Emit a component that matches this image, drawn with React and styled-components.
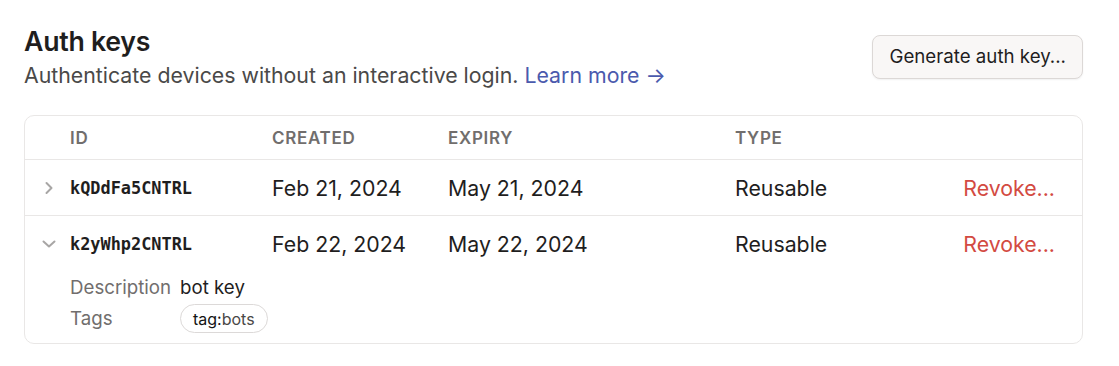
import React from "react";
import styled, { createGlobalStyle } from "styled-components";

const Global = createGlobalStyle`
  html, body { margin: 0; padding: 0; background: #ffffff; }
  body { font-family: Inter, "Noto Sans", sans-serif; color: #1f1e1e; -webkit-font-smoothing: antialiased; }
  * { box-sizing: border-box; }
`;

const Page = styled.div`
  padding: 23px 36px 0 24px;
`;

const Header = styled.div`
  display: flex;
  justify-content: space-between;
  align-items: center;
`;

const TitleBlock = styled.div`
  display: flex;
  flex-direction: column;
  gap: 2px;
`;

const Title = styled.h1`
  margin: 0;
  font-size: 26.7px;
  line-height: 36px;
  font-weight: 600;
  letter-spacing: -0.01em;
  color: #1f1e1e;
`;

const Subtitle = styled.p`
  margin: 0;
  font-size: 21.3px;
  line-height: 28px;
  color: #4a4948;
`;

const Link = styled.a`
  color: #4b5aad;
  text-decoration: none;
`;

const Button = styled.button`
  font-family: inherit;
  font-size: 18.7px;
  line-height: 24px;
  color: #1f1e1e;
  background: #f9f7f6;
  border: 1px solid #dcd8d6;
  border-radius: 8px;
  padding: 9px 16px;
  height: 44px;
  box-shadow: 0 1px 2px rgba(0, 0, 0, 0.06);
  margin-top: 2px;
`;

const Card = styled.div`
  margin-top: 26px;
  border: 1px solid #e9e7e6;
  border-radius: 10px;
`;

const Row = styled.div`
  display: grid;
  grid-template-columns: 45px 202px 176px 287px 1fr auto;
  align-items: center;
  height: ${(p) => p.$h}px;
  padding-right: 27px;
  border-bottom: ${(p) => (p.$divider ? "1px solid #e9e7e6" : "none")};
`;

const HeadCell = styled.div`
  font-size: 17px;
  font-weight: 600;
  letter-spacing: 0.04em;
  text-transform: uppercase;
  color: #716e6d;
`;

const Chevron = styled.div`
  display: flex;
  justify-content: center;
  align-items: center;
  padding-left: 2px;
`;

const KeyId = styled.div`
  font-family: "DejaVu Sans Mono", "Liberation Mono", monospace;
  font-weight: 700;
  font-size: 16.9px;
  color: #1f1e1e;
`;

const Cell = styled.div`
  font-size: 21.3px;
  color: #1f1e1e;
`;

const Revoke = styled.div`
  font-size: 21.3px;
  color: #d34a42;
  text-align: right;
`;

const Details = styled.div`
  display: grid;
  grid-template-columns: 110px 1fr;
  row-gap: 2px;
  align-items: center;
  padding: 2px 0 10px 45px;
`;

const Label = styled.div`
  font-size: 18.7px;
  line-height: 28px;
  color: #716e6d;
`;

const Value = styled.div`
  font-size: 18.7px;
  line-height: 28px;
  color: #1f1e1e;
`;

const Pill = styled.span`
  display: inline-flex;
  align-items: center;
  height: 29px;
  padding: 0 12px;
  border: 1px solid #dcd9d8;
  border-radius: 999px;
  font-size: 16px;
  color: #1f1e1e;
`;

const PillKey = styled.span`
  color: #141313;
`;

const PillVal = styled.span`
  color: #4a4847;
`;

const ChevronRight = () => (
  <svg width="10" height="14" viewBox="0 0 10 14" fill="none">
    <polyline points="2.5,2 7.5,7 2.5,12" stroke="#a8a6a5" strokeWidth="2" strokeLinecap="round" strokeLinejoin="round" />
  </svg>
);

const ChevronDown = () => (
  <svg width="14" height="10" viewBox="0 0 14 10" fill="none">
    <polyline points="1.5,2.5 7,7.5 12.5,2.5" stroke="#a8a6a5" strokeWidth="2" strokeLinecap="round" strokeLinejoin="round" />
  </svg>
);

const keys = [
  { id: "kQDdFa5CNTRL", created: "Feb 21, 2024", expiry: "May 21, 2024", type: "Reusable", open: false },
  { id: "k2yWhp2CNTRL", created: "Feb 22, 2024", expiry: "May 22, 2024", type: "Reusable", open: true, description: "bot key", tags: [["tag:", "bots"]] },
];

export default function App() {
  return (
    <>
      <Global />
      <Page>
        <Header>
          <TitleBlock>
            <Title>Auth keys</Title>
            <Subtitle>
              Authenticate devices without an interactive login. <Link href="#">Learn more →</Link>
            </Subtitle>
          </TitleBlock>
          <Button>Generate auth key...</Button>
        </Header>
        <Card>
          <Row $h={44} $divider>
            <div />
            <HeadCell>ID</HeadCell>
            <HeadCell>Created</HeadCell>
            <HeadCell>Expiry</HeadCell>
            <HeadCell>Type</HeadCell>
            <div />
          </Row>
          {keys.map((k, i) => (
            <div key={k.id}>
              <Row $h={56} $divider={i < keys.length - 1}>
                <Chevron>{k.open ? <ChevronDown /> : <ChevronRight />}</Chevron>
                <KeyId>{k.id}</KeyId>
                <Cell>{k.created}</Cell>
                <Cell>{k.expiry}</Cell>
                <Cell>{k.type}</Cell>
                <Revoke>Revoke...</Revoke>
              </Row>
              {k.open && (
                <Details>
                  <Label>Description</Label>
                  <Value>{k.description}</Value>
                  <Label>Tags</Label>
                  <div>
                    {k.tags.map(([a, b]) => (
                      <Pill key={a + b}>
                        <PillKey>{a}</PillKey>
                        <PillVal>{b}</PillVal>
                      </Pill>
                    ))}
                  </div>
                </Details>
              )}
            </div>
          ))}
        </Card>
      </Page>
    </>
  );
}
